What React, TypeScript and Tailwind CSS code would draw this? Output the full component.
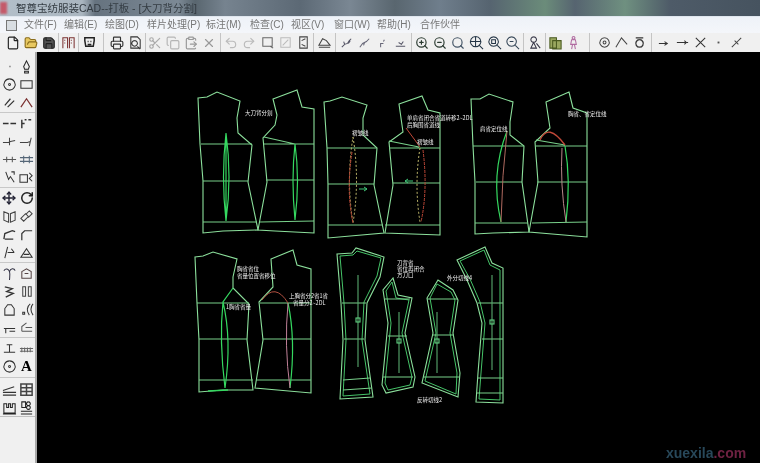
import { ReactNode } from "react";
import {
  File, FolderOpen, Save, Printer, Scissors, Copy, ClipboardPaste, X, Undo2, Redo2,
  ZoomIn, ZoomOut, Search, Move, RotateCw,
} from "lucide-react";

const cjk = "font-['Liberation_Sans','Noto_Sans_CJK_SC',sans-serif]";

const menus = [
  { label: "文件(F)", w: "w-[40px]" },
  { label: "编辑(E)", w: "w-[41px]" },
  { label: "绘图(D)", w: "w-[42px]" },
  { label: "样片处理(P)", w: "w-[59px]" },
  { label: "标注(M)", w: "w-[44px]" },
  { label: "检查(C)", w: "w-[41px]" },
  { label: "视区(V)", w: "w-[43px]" },
  { label: "窗口(W)", w: "w-[43px]" },
  { label: "帮助(H)", w: "w-[43px]" },
  { label: "合作伙伴", w: "w-[50px]" },
];

function Ico({ d, color = "#333", width = 1.1, fill = "none" }: { d: string; color?: string; width?: number; fill?: string }) {
  return (
    <svg viewBox="0 0 16 16" className="w-[15px] h-[15px]" fill={fill} stroke={color} strokeWidth={width}>
      <path d={d} />
    </svg>
  );
}

function Cell({ children, w = "w-[18px]" }: { children?: ReactNode; w?: string }) {
  return <div className={`${w} h-[18px] flex items-center justify-center shrink-0`}>{children}</div>;
}

function Sep({ w = "w-[4px]" }: { w?: string }) {
  return (
    <div className={`${w} h-full flex justify-center shrink-0`}>
      <div className="w-px h-full bg-[#c4c4c4]" />
    </div>
  );
}

const lucideCls = "w-[14px] h-[14px]";

function TopToolbar() {
  return (
    <div className="h-[19px] bg-[#f0f0f0] flex items-center pl-[4px] blur-[0.5px] shrink-0">
      <Cell><File className={lucideCls} color="#222" /></Cell>
      <Cell><FolderOpen className={lucideCls} color="#8a6d1c" fill="#e8c860" /></Cell>
      <Cell><Save className={lucideCls} color="#222" fill="#555" /></Cell>
      <Sep w="w-px" />
      <Cell><Ico d="M2 14V3h5v11M9 14V3h5v11M4 5v1M4 8v1M11 5v1M11 8v1" color="#7a3030" /></Cell>
      <Sep w="w-[3px]" />
      <Cell><Ico d="M3 3h10v3l-1 6H4L3 6zM6 7h1M9 7h1M6 10h4" color="#222" width={1.6} /></Cell>
      <Sep w="w-[10px]" />
      <Cell><Printer className={lucideCls} color="#333" /></Cell>
      <Cell><Ico d="M3 2h7l3 3v9H3zM10 12l3 3M7 6a3 3 0 1 0 .1 0" color="#333" /></Cell>
      <Sep w="w-[2px]" />
      <Cell><Scissors className={lucideCls} color="#aaa" /></Cell>
      <Cell><Copy className={lucideCls} color="#b5b5b5" /></Cell>
      <Cell><ClipboardPaste className={lucideCls} color="#999" /></Cell>
      <Cell><X className={lucideCls} color="#999" /></Cell>
      <Sep w="w-[4px]" />
      <Cell><Undo2 className={lucideCls} color="#bbb" /></Cell>
      <Cell><Redo2 className={lucideCls} color="#bbb" /></Cell>
      <Cell><Ico d="M3 3h10v9H3zM11 12l3 2" color="#666" /></Cell>
      <Cell><Ico d="M3 3h10v10H3zM5 11l6-6" color="#bbb" /></Cell>
      <Cell><Ico d="M4 2h8v12H4zM6 6l4-2M6 10l4 2" color="#444" /></Cell>
      <Sep w="w-[3px]" />
      <Cell><Ico d="M2 11l4-7 4 2 4 5zM2 13h12" color="#444" /></Cell>
      <Sep w="w-[4px]" />
      <Cell><Ico d="M3 13l3-3 3-1 2-3 2-2M5 7l1 3M10 9l2-3" color="#556" /></Cell>
      <Cell><Ico d="M3 13l3-4 4-2 3-3M7 11l1-3" color="#667" /></Cell>
      <Cell><Ico d="M6 13V9h3M9 7l1-2" color="#667" /></Cell>
      <Cell><Ico d="M3 12h10M6 8l3 2 2-3" color="#556" /></Cell>
      <Sep w="w-[4px]" />
      <Cell><ZoomIn className={lucideCls} color="#2a3a30" /></Cell>
      <Cell><ZoomOut className={lucideCls} color="#2a3a30" /></Cell>
      <Cell><Search className={lucideCls} color="#456" /></Cell>
      <Cell><Ico d="M7 1.5a5.5 5.5 0 1 0 .1 0M1.5 7h11M7 1.5v11M11 11l4 4" color="#234" /></Cell>
      <Cell><Ico d="M7 2a5 5 0 1 0 .1 0M5 5h4v4H5zM11 11l4 4" color="#234" /></Cell>
      <Cell><Ico d="M7 2a5 5 0 1 0 .1 0M5 7h4M11 11l4 4" color="#345" /></Cell>
      <Sep w="w-[5px]" />
      <Cell><Ico d="M6 2a3 3 0 1 0 .1 0M3 14l3-6 3 6zM9 9l4 5" color="#334" /></Cell>
      <Sep w="w-[2px]" />
      <Cell><Ico d="M2 3h7v11H2zM5 6h9v9H5z" color="#4a5a20" fill="#9aa860" /></Cell>
      <Cell><Ico d="M8 1.5a1.5 1.5 0 1 0 .1 0M6 5h4l1 5H5zM7 10l-1 5M9 10l1 5" color="#b06aa0" /></Cell>
      <Sep w="w-[14px]" />
      <Cell w="w-[16px]"><Ico d="M8 3a5 5 0 1 0 .1 0M8 6.5a1.5 1.5 0 1 0 .1 0" color="#444" /></Cell>
      <Cell><Ico d="M2 13l6-10 6 7" color="#444" /></Cell>
      <Cell><Ico d="M4 3h8M8 5a4 4 0 1 0 .1 0" color="#333" width={1.4} /></Cell>
      <Sep w="w-[7px]" />
      <Cell><Ico d="M2 9h8M8 7l3 2-3 2" color="#333" /></Cell>
      <Cell><Ico d="M2 8h12M10 6l2 2-2 2" color="#333" /></Cell>
      <Cell><Ico d="M3 3l10 10M13 3L3 13" color="#333" /></Cell>
      <Cell><Ico d="M8 7v2" color="#555" width={2} /></Cell>
      <Cell><Ico d="M3 13l5-5 5-5M6 6l4 4" color="#444" /></Cell>
    </div>
  );
}

const leftGroups: ReactNode[][] = [
  [
    <Ico d="M8 8h1" color="#444" width={1.5} />,
    <Ico d="M8 2l3 6-1 3H6L5 8zM6 13h4v2H6z" color="#222" />,
    <Ico d="M8 2a6 6 0 1 0 .1 0M8 7a1 1 0 1 0 .1 0" color="#333" />,
    <Ico d="M2 4h12v8H2z" color="#333" />,
    <Ico d="M3 11l6-7M6 13l7-7" color="#333" width={1.3} />,
    <Ico d="M2 13l6-9 6 9M8 4" color="#7a3030" width={1.3} />,
  ],
  [
    <Ico d="M1 8h6M9 8h6" color="#333" width={1.5} />,
    <Ico d="M3 4v9M6 4h2M10 4h3M3 8h3" color="#333" width={1.5} />,
    <Ico d="M1 9h6l2-1 5-1M8 4v8" color="#444" />,
    <Ico d="M1 9h8l3-1M13 4l-2 9" color="#444" />,
    <Ico d="M1 8h14M5 5v6M11 5v6" color="#555" />,
    <Ico d="M1 6h14M1 10h14M5 4v8M11 4v8" color="#567" />,
    <Ico d="M4 2l3 8 2-3 4 6M10 2h3v3" color="#333" />,
    <Ico d="M1 5h8v8H1zM11 3l3 3-3 3 3 3" color="#333" />,
  ],
  [
    <Move className={lucideCls} color="#223" strokeWidth={2.4} />,
    <RotateCw className={lucideCls} color="#222" strokeWidth={2.6} />,
    <Ico d="M2 3l5 2v9l-5-2zM14 3l-5 2v9l5-2z" color="#444" />,
    <Ico d="M2 10l5-5 3 3-5 5zM7 6l4-4 3 3-4 4" color="#444" />,
    <Ico d="M2 13l1-6 8-3 3 1M3 13h9" color="#333" width={1.4} />,
    <Ico d="M3 14V7l3-3h8" color="#333" width={1.3} />,
    <Ico d="M3 14l3-12M6 8h7M10 4l3 4" color="#333" />,
    <Ico d="M2 13h12L8 4zM5 10h6" color="#333" />,
  ],
  [
    <Ico d="M2 5c2-3 5-2 6 1s0 7 0 9M8 6c1-4 5-4 6-1" color="#334" />,
    <Ico d="M3 6l5-3 5 3v7H3zM6 8h4" color="#544" />,
    <Ico d="M3 3l8 2-6 3 7 2-8 4" color="#333" width={1.4} />,
    <Ico d="M4 3v10h3V3zM10 3v10h3V3z" color="#444" />,
    <Ico d="M3 14V7l3-4h4l3 4v7z" color="#333" />,
    <Ico d="M4 11h2v2H4zM12 2C8 5 8 10 11 14M15 2c-3 3-3 8 0 12" color="#333" />,
    <Ico d="M2 9h12M4 9v5M8 12h6" color="#333" />,
    <Ico d="M3 12h11M3 12V7l5-4M7 8h7" color="#555" />,
  ],
  [
    <Ico d="M2 12h12M8 4v8M5 4h6" color="#333" />,
    <Ico d="M1 8h14M1 11h14M3 7v5M6 7v5M9 7v5M12 7v5" color="#666" />,
    <Ico d="M8 2a6 6 0 1 0 .1 0M8 7a1 1 0 1 0 .1 0" color="#333" />,
    <span className="font-['Liberation_Serif',serif] font-bold text-[15px] leading-none text-black">A</span>,
  ],
  [
    <Ico d="M1 9l12-4M1 11h14M1 14h14" color="#333" width={1.2} />,
    <Ico d="M2 2h12v12H2zM2 6h12M2 10h12M8 2v12" color="#444" width={1.6} />,
    <Ico d="M2 14V4h3v4h2V4h2v4h2V4h3v10zM1 15h14" color="#222" />,
    <Ico d="M3 2h4v6H3zM10 2a2 2 0 1 0 .1 0M10 6a2 2 0 1 0 .1 0M2 12h12M2 15h12" color="#222" />,
  ],
];

function LeftToolbar() {
  return (
    <aside className="w-[37px] shrink-0 bg-[#f0f0f0] border-r-[2px] border-[#a8a8a8] flex flex-col pt-[5px]">
      <div className="flex flex-col blur-[0.5px]">
        {leftGroups.map((group, i) => (
          <div key={i}>
            <div className="grid grid-cols-[18px_17px]">
              {group.map((icon, j) => (
                <Cell key={j} w="w-full">{icon}</Cell>
              ))}
            </div>
            {i < leftGroups.length - 1 && (
              <div className={`${i === 4 ? "h-[5px]" : "h-[3px]"} flex items-center`}>
                <div className="h-px w-full bg-[#c8c8c8]" />
              </div>
            )}
          </div>
        ))}
      </div>
      <div className="h-px bg-[#c0c0c0]" />
    </aside>
  );
}

type Piece = { outline: string; inner?: string; lines: string; center?: string; square?: [number, number] };

const pieces: Piece[] = [
  { outline: "198,98 207,97 217,92 240,101 237,118 238,133 252,145 248,182 258,230 223,231 203,233 203,181 200,144", lines: "M201 144H252M203 181H248M203 222H257" },
  { outline: "273,99 297,90 302,107 314,109 314,233 275,231 258,230 267,182 263,138 275,125 277,115", lines: "M264 144H314M266 180H314M260 222L314 221M264 137L295 144" },
  { outline: "324,102 330,101 342,97 367,105 363,118 363,135 377,148 374,185 384,233 328,238 328,185 327,148", lines: "M327 148H377M328 184H374M328 225H383" },
  { outline: "399,104 422,96 428,110 440,113 440,235 385,233 393,185 389,142 403,132", lines: "M389 148H440M393 183H440M385 225H440M389 141L419 147" },
  { outline: "471,99 480,99 489,94 513,102 510,122 510,135 524,146 522,182 529,232 493,233 475,234 475,182 473,146", lines: "M473 146H524M476 182H522M475 223H528" },
  { outline: "546,102 569,92 573,108 587,113 587,237 529,232 538,182 535,142 550,128", lines: "M536 146H587M537 182H587M532 223L587 222M536 140L565 145" },
  { outline: "195,257 203,256 213,252 237,259 233,277 233,288 249,304 247,340 253,390 223,390 199,392 199,340 197,303", lines: "M197 303H249M199 339H247M199 380H253" },
  { outline: "271,259 293,250 297,265 311,269 311,393 255,388 263,340 259,302 273,287", lines: "M260 303H311M263 339H311M256 380H311" },
  {
    outline: "337,254 352,253 356,248 384,257 380,277 367,303 365,340 373,397 340,399 343,340 341,303",
    inner: "340,256 353,255 357,251 381,258 377,276 364,302 362,340 370,394 343,396 346,340 344,303",
    lines: "M342 303H366M344 339H364M343 380L370 378M343 390L372 388",
    center: "M358 275V367",
    square: [358, 320],
  },
  {
    outline: "393,278 383,290 388,323 382,385 386,393 413,387 415,377 405,333 412,298 398,295",
    inner: "392,282 386,291 391,323 385,383 388,390 410,385 412,377 402,333 409,300 396,298",
    lines: "M385 299H410M388 336H407M383 377H413",
    center: "M399 312V373",
    square: [399, 341],
  },
  {
    outline: "438,280 427,298 433,333 422,383 458,397 460,373 453,333 458,300 453,290",
    inner: "437,284 430,298 436,333 425,381 456,394 457,373 450,333 455,300 451,292",
    lines: "M427 299H458M432 335H454M423 377H460",
    center: "M437 312V373",
    square: [437, 341],
  },
  {
    outline: "457,260 485,247 492,263 503,268 503,403 476,402 478,373 482,323 477,303 467,280",
    inner: "460,261 484,250 490,265 500,270 500,400 479,399 481,373 485,323 480,302 470,279",
    lines: "M478 303H503M482 339H503M478 378H503M477 393H503",
    center: "M492 275V370",
    square: [492, 322],
  },
];

const labels: { x: number; y: number; text: string }[] = [
  { x: 245, y: 115, text: "大刀背分割" },
  { x: 352, y: 135, text: "褶皱线" },
  { x: 407, y: 120, text: "单肩省闭合省道转移2~2DL" },
  { x: 407, y: 127, text: "后胸围省道线" },
  { x: 417, y: 144, text: "褶皱线" },
  { x: 480, y: 131, text: "肩省定位线" },
  { x: 568, y: 116, text: "胸省、省定位线" },
  { x: 237, y: 271, text: "胸省省位" },
  { x: 237, y: 278, text: "省量位置省移位" },
  { x: 226, y: 309, text: "1胸省省量" },
  { x: 289, y: 298, text: "上胸省分2省1省" },
  { x: 293, y: 305, text: "省量分2~2DL" },
  { x: 397, y: 265, text: "刀背省" },
  { x: 397, y: 271, text: "省位再闭合" },
  { x: 397, y: 277, text: "方刀口" },
  { x: 447, y: 280, text: "外分切线4" },
  { x: 417, y: 402, text: "反转切线2" },
];

function Drawing() {
  return (
    <svg viewBox="37 52 723 411" className="w-full h-full block" fill="none">
      {pieces.map((p, i) => (
        <g key={i} strokeWidth={1.1}>
          <polygon points={p.outline} stroke="#8ce09c" />
          {p.inner && <polygon points={p.inner} stroke="#45c468" strokeWidth={1} />}
          <path d={p.lines} stroke="#78d08a" />
          {p.center && <path d={p.center} stroke="#58aa6e" />}
          {p.square && <rect x={p.square[0] - 2} y={p.square[1] - 2} width={4} height={4} stroke="#60d080" />}
        </g>
      ))}

      {/* darts */}
      <g stroke="#35d860" strokeWidth={1.2}>
        <path d="M226 133Q221 177 226 221Q232 177 226 133M226 133V221" />
        <path d="M295 144Q291 180 295 220Q300 180 295 144" />
        <path d="M233 288L223 302Q232 340 225 388Q219 340 223 302" />
        <path d="M208 391L228 390" strokeWidth={1.6} />
        <path d="M288 303Q296 340 290 388" />
        <path d="M507 131Q490 175 501 222" />
        <path d="M565 146Q571 180 566 222" />
      </g>
      <g stroke="#c8c070" strokeWidth={1} strokeDasharray="2 2">
        <path d="M353 137Q360 180 353 223Q346 180 353 137" />
        <path d="M420 148Q414 185 420 222" />
      </g>
      <g stroke="#c04838" strokeWidth={1}>
        <path d="M352 152Q346 190 353 223" strokeDasharray="3 1" />
        <path d="M423 150Q428 190 421 222" strokeDasharray="3 1" />
        <path d="M406 128L420 147" />
        <path d="M507 131Q502 175 501 222" stroke="#b06a60" />
        <path d="M540 140Q548 122 565 145" strokeWidth={1.3} />
        <path d="M562 148Q560 185 566 222" stroke="#b8888a" />
        <path d="M262 300Q275 282 288 303" stroke="#b05040" />
        <path d="M288 303Q284 345 290 388" stroke="#c08098" />
      </g>
      <g stroke="#40c878">
        <path d="M359 189H367M364 187L367 189L364 191" />
        <path d="M405 181H413M408 179L405 181L408 183" />
      </g>

      <g className="blur-[0.3px]">
        {labels.map((l) => (
          <text key={l.text} x={l.x} y={l.y} fill="#f0f0f0" fontSize={5.5} fontFamily="'Noto Sans CJK SC', sans-serif">
            {l.text}
          </text>
        ))}
      </g>

      <text x={666} y={458} fontSize={14} fontWeight={700} fontFamily="'Liberation Sans', sans-serif" className="blur-[0.7px]">
        <tspan fill="#28485a">xuexila</tspan>
        <tspan fill="#6e2242">.com</tspan>
      </text>
    </svg>
  );
}

export default function App() {
  return (
    <div className={`w-[760px] h-[463px] flex flex-col overflow-hidden bg-[#f0f0f0] ${cjk}`}>
      {/* Title bar */}
      <div className="h-[17px] shrink-0 border-b border-[#dfe6ee] flex items-center bg-[linear-gradient(90deg,#b3bfc9_0px,#aab6c0_82px,#66737f_95px,#7c8995_178px,#59666f_195px,#76838f_225px,#5c6975_300px,#7a8793_350px,#59666f_395px,#6f7e8c_440px,#566470_490px,#6b8c7a_545px,#566470_575px,#6f9080_625px,#4e5b68_670px,#46535f_760px)]">
        <div className="w-[7px] h-[12px] bg-[#c45a6a] blur-[1px] shrink-0" />
        <span className="ml-[9px] text-[10.5px] leading-none text-[#333b42] blur-[0.4px] whitespace-nowrap">智尊宝纺服装CAD--打板 - [大刀背分割]</span>
      </div>

      {/* Menu */}
      <div className="h-[16px] shrink-0 flex items-center bg-[linear-gradient(180deg,#eef2f8,#f4f6fa)] pl-[6px] blur-[0.4px]">
        <div className="w-[11px] h-[11px] border border-[#777] bg-[#d8dde2] shrink-0 mr-[7px]" />
        {menus.map((m) => (
          <span key={m.label} className={`${m.w} shrink-0 text-[10px] leading-none text-[#777] whitespace-nowrap`}>
            {m.label}
          </span>
        ))}
      </div>

      <TopToolbar />

      <div className="flex-1 min-h-0 flex">
        <LeftToolbar />
        <main className="flex-1 bg-black min-w-0">
          <Drawing />
        </main>
      </div>
    </div>
  );
}
